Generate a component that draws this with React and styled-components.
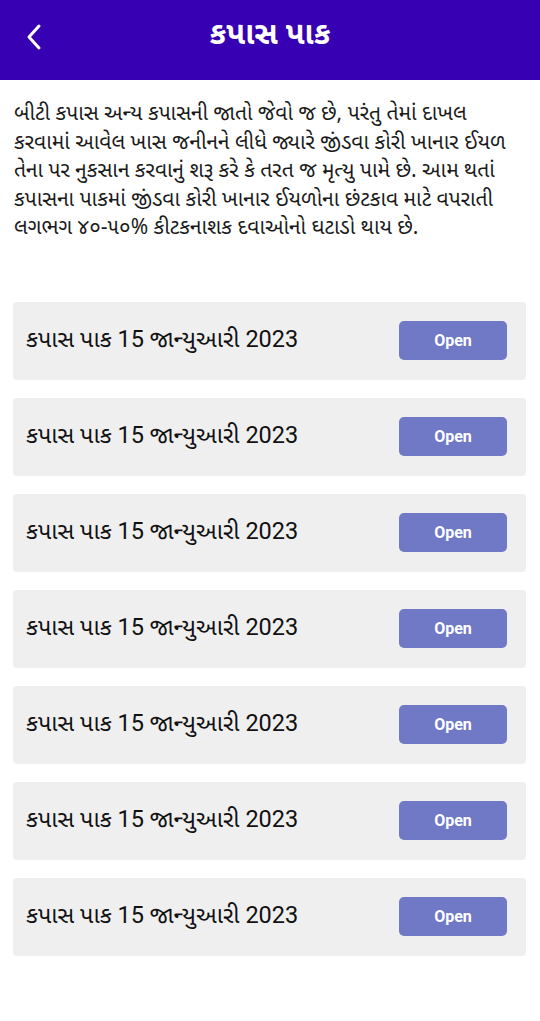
import React from 'react';
import styled, { createGlobalStyle } from 'styled-components';

const GlobalStyle = createGlobalStyle`
  body {
    margin: 0;
    background: #ffffff;
    font-family: "Noto Sans Gujarati", "Noto Sans", Roboto, sans-serif;
  }
`;

const introLines = [
  'બીટી કપાસ અન્ય કપાસની જાતો જેવો જ છે, પરંતુ તેમાં દાખલ',
  'કરવામાં આવેલ ખાસ જનીનને લીધે જ્યારે જીંડવા કોરી ખાનાર ઈયળ',
  'તેના પર નુકસાન કરવાનું શરૂ કરે કે તરત જ મૃત્યુ પામે છે. આમ થતાં',
  'કપાસના પાકમાં જીંડવા કોરી ખાનાર ઈયળોના છંટકાવ માટે વપરાતી',
  'લગભગ ૪૦-૫૦% કીટકનાશક દવાઓનો ઘટાડો થાય છે.',
];

const items = Array.from({ length: 7 }, () => 'કપાસ પાક 15 જાન્યુઆરી 2023');

const App = () => (
  <Page>
    <GlobalStyle />
    <Header>
      <BackButton aria-label="back">
        <svg width="20" height="28" viewBox="0 0 20 28" fill="none">
          <path d="M15 3 L5 14 L15 25" stroke="#fff" strokeWidth="3" strokeLinecap="round" strokeLinejoin="round" />
        </svg>
      </BackButton>
      <Title>કપાસ પાક</Title>
    </Header>

    {/* intro text about BT cotton */}
    <Intro>
      {introLines.map((line, i) => (
        <React.Fragment key={i}>
          {line}
          {i < introLines.length - 1 && <br />}
        </React.Fragment>
      ))}
    </Intro>

    <List>
      {items.map((label, i) => (
        <Card key={i}>
          <CardLabel>{label}</CardLabel>
          <OpenButton>Open</OpenButton>
        </Card>
      ))}
    </List>
  </Page>
);

const Page = styled.div`
  width: 540px;
  min-height: 1021px;
  background: #fff;
`;

const Header = styled.header`
  height: 80px;
  background: #3700b3;
  display: flex;
  align-items: center;
  justify-content: center;
  position: relative;
`;

const BackButton = styled.div`
  position: absolute;
  left: 24px;
  top: 23px;
  display: flex;
`;

const Title = styled.h1`
  margin: 0 0 8px;
  color: #fff;
  font-size: 31px;
  font-weight: 700;
`;

const Intro = styled.p`
  margin: 0;
  padding: 21px 8px 0 14px;
  font-size: 21px;
  line-height: 28.5px;
  white-space: nowrap;
  color: #1a1a1a;
`;

const List = styled.div`
  display: flex;
  flex-direction: column;
  gap: 18px;
  padding: 58px 14px 0 13px;
`;

const Card = styled.div`
  height: 78px;
  background: #efefef;
  border-radius: 4px;
  display: flex;
  align-items: center;
  justify-content: space-between;
  padding: 0 19px 0 13px;
`;

const CardLabel = styled.span`
  font-family: Roboto, "Noto Sans Gujarati", sans-serif;
  font-size: 23.5px;
  color: #111;
`;

const OpenButton = styled.button`
  width: 108px;
  height: 39px;
  border: none;
  border-radius: 5px;
  background: #7079c6;
  color: #fff;
  font-family: Roboto, sans-serif;
  font-weight: 700;
  font-size: 16px;
`;

export default App;
